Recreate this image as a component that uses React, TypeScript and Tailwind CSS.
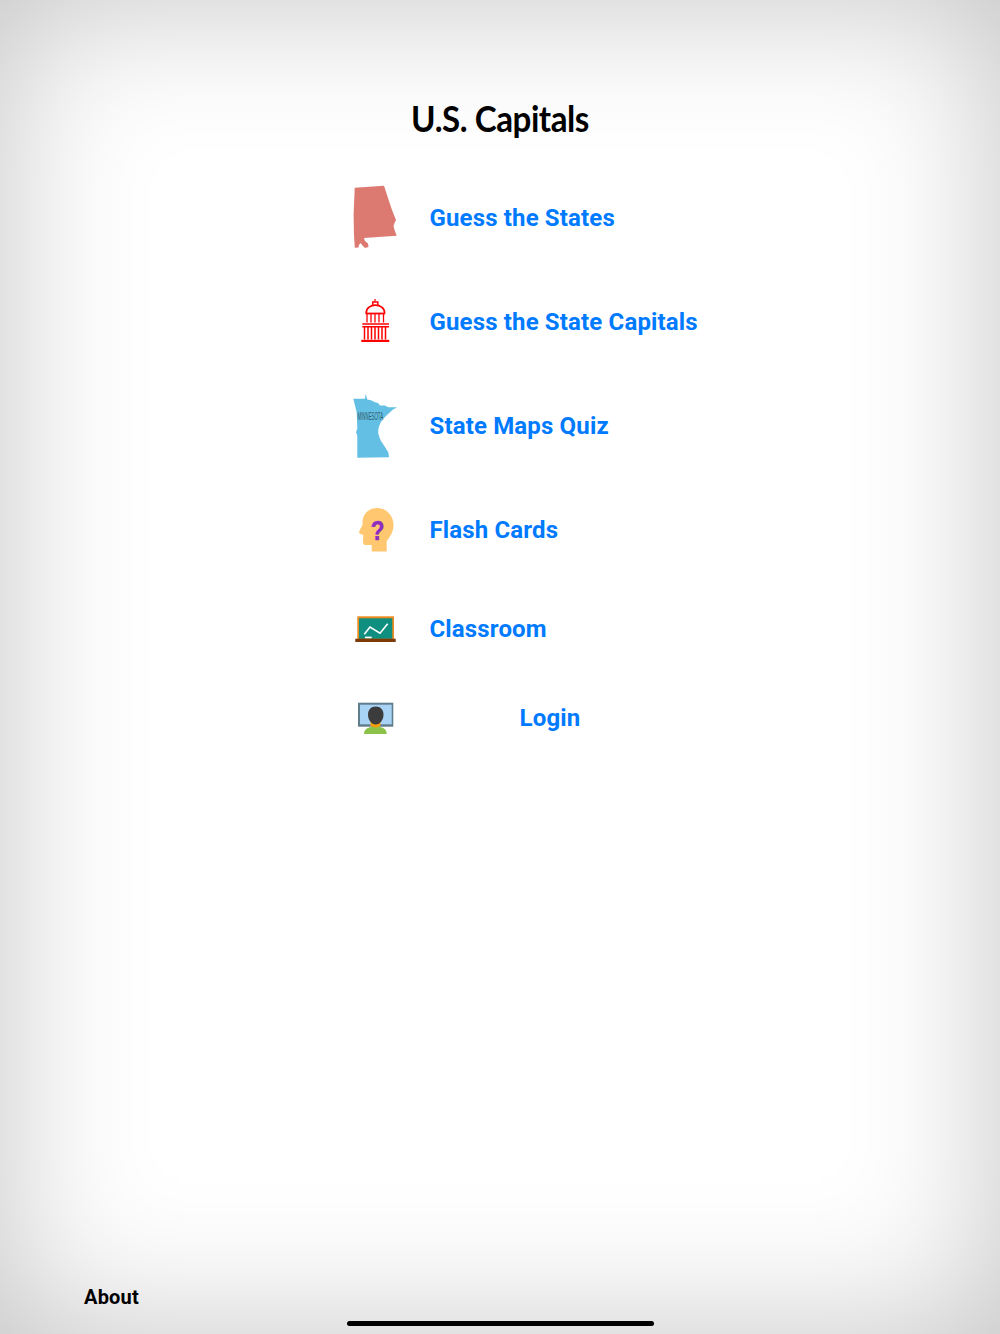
import React from "react";

const sans = "font-['Roboto','Liberation_Sans',sans-serif]";

function Alabama() {
  return (
    <svg width="50" height="66" viewBox="350 185 50 66">
      <path fill="#dc7a72" d="M354.7 187.7L384 185.7L388 198L392 210L396 220L394.5 223L393.5 226L394.5 230L396.7 235.7L364 238L365 241L368 243.5L368.5 247L365 248L362.5 245.5L360.5 243L359 245L358.5 247.5L354.8 247.7L354 235L353.6 215Z" />
    </svg>
  );
}

function Capitol() {
  return (
    <svg width="50" height="46" viewBox="350 298.5 50 46" fill="none" stroke="#ff0000">
      <path strokeWidth="1.2" d="M375 297.5V301" />
      <path strokeWidth="1.5" d="M372.8 305V301.5H377.8V305" />
      <path strokeWidth="1.7" d="M366.2 312.5C366.2 302 384.6 302 384.6 312.5" />
      <path strokeWidth="1.8" d="M365.5 313H385.2" />
      <path strokeWidth="1.3" d="M367 313V322M371 313V322M375 313V322M379 313V322M383.5 313V322" />
      <path strokeWidth="1.5" d="M362.3 323.5H389M362.3 326.3H389" />
      <path strokeWidth="1.5" d="M364.5 326.5V339M368 326.5V339M371.5 326.5V339M375 326.5V339M378.5 326.5V339M382 326.5V339M385.5 326.5V339" />
      <path strokeWidth="2.2" d="M361.3 340.4H389.3" />
    </svg>
  );
}

function Minnesota() {
  return (
    <svg width="50" height="66" viewBox="350 392.5 50 66">
      <path fill="#63c0e4" d="M353.3 398.3L365 398.3L365.7 393.3L367.3 399L371 399.7L375 401.7L378 402.5L380 405L385 405L388.3 406.7L397.3 406.7L393 409L390 411.7L386.5 415L383.3 418.3L381 421.5L379.3 425L378.3 429L378.3 433.3L379.5 437L380.7 440L384 445L388.3 451.7L389 456.7L357.3 457.3L357.3 435L356 431.7L357.3 428L356.7 411.7Z" />
      <text transform="translate(357.5 419) scale(1 2.54)" fontSize="4.37" fill="#2f5566" fontFamily="'Liberation Sans',sans-serif">MINNESOTA</text>
    </svg>
  );
}

function Head() {
  return (
    <svg width="50" height="46" viewBox="350 507 50 46">
      <path fill="#ffc870" d="M377 508C386.5 508 393.5 515.5 393.5 525C393.5 532 390 537 386.7 541V551.5H371.7V545H365.5C363.5 545 362.8 543.5 363 541L363.3 535L359.5 533.5C359 532.5 359 531.5 359.5 530.5L362.5 525C361.5 515 368 508 377 508Z" />
      <text transform="translate(377.5 540) scale(0.8 1)" fontSize="28" fontWeight="700" fill="#8e2bc0" stroke="#8e2bc0" strokeWidth="0.6" textAnchor="middle" fontFamily="'Liberation Sans',sans-serif">?</text>
    </svg>
  );
}

function Board() {
  return (
    <svg width="50" height="28" viewBox="350 614 50 28">
      <rect x="357.3" y="615.3" width="36.7" height="23" fill="#ee8b1e" />
      <rect x="359" y="617.3" width="33.3" height="20.5" fill="#0f8f80" />
      <path d="M364.3 633.3L370 626L380 632.3L387.7 622.7" fill="none" stroke="#fff" strokeWidth="1.6" />
      <rect x="365" y="635.6" width="6.7" height="1.8" fill="#fff" />
      <rect x="355.3" y="637.7" width="40.4" height="3.3" fill="#7c3a06" />
    </svg>
  );
}

function Learner() {
  return (
    <svg width="50" height="33" viewBox="350 701 50 33">
      <rect x="358" y="701.7" width="35.3" height="24" fill="#607d8b" />
      <rect x="360" y="703.7" width="31.7" height="19.6" fill="#a9d3f5" />
      <path d="M364 733C364 727.5 369 725.5 375.5 725.5C382 725.5 386.7 727.5 386.7 733Z" fill="#8bc34a" />
      <path d="M370.5 718H380.5V724.5C379 727 372 727 370.5 724.5Z" fill="#f59e0b" />
      <path d="M375.7 705.5C380.5 705.5 383.5 709 383.5 713.5C383.5 719 380 723.5 375.7 723.5C371.4 723.5 368 719 368 713.5C368 709 371 705.5 375.7 705.5Z" fill="#3c3c3c" />
    </svg>
  );
}

const rows = [
  { label: "Guess the States", icon: <Alabama />, h: "h-[104px]", text: "" },
  { label: "Guess the State Capitals", icon: <Capitol />, h: "h-[104px]", text: "" },
  { label: "State Maps Quiz", icon: <Minnesota />, h: "h-[104px]", text: "" },
  { label: "Flash Cards", icon: <Head />, h: "h-[104px]", text: "" },
  { label: "Classroom", icon: <Board />, h: "h-[94px]", text: "" },
  { label: "Login", icon: <Learner />, h: "h-[84px]", text: "w-[241px] text-center" },
];

export default function App() {
  return (
    <div className={`relative flex h-[1334px] w-full flex-col bg-white shadow-[inset_0_0_150px_rgba(0,0,0,0.24)] ${sans}`}>
      <h1 className="scale-x-[0.92] pt-[95px] text-center font-['Lato','Liberation_Sans',sans-serif] text-[36px] leading-[46px] font-bold tracking-[-0.5px] text-black">
        U.S. Capitals
      </h1>
      <ul className="mt-[25px] flex flex-col pl-[350px]">
        {rows.map((r) => (
          <li key={r.label} className={`flex items-center gap-[29.5px] ${r.h}`}>
            <span className="flex w-[50px] shrink-0 justify-center">{r.icon}</span>
            <a className={`text-[24px] leading-[30px] font-bold tracking-[0.15px] whitespace-nowrap text-[#007aff] ${r.text}`}>{r.label}</a>
          </li>
        ))}
      </ul>
      <div className="mt-auto pb-[25px] pl-[84px] text-[20px] leading-[24px] font-bold tracking-[0.2px] text-black">About</div>
      <div className="absolute bottom-[8px] left-[347px] h-[5px] w-[307px] rounded-full bg-black" />
    </div>
  );
}
